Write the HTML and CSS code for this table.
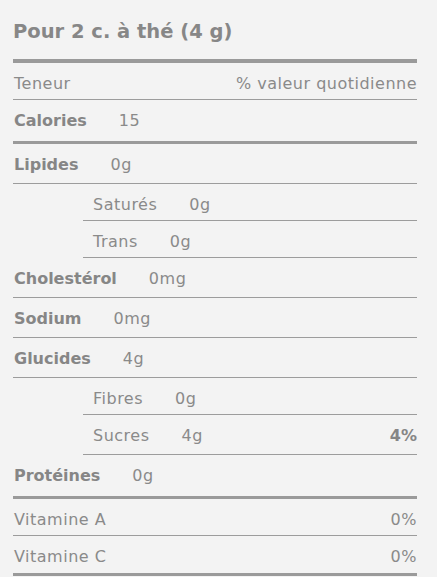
FILE: index.html
```html
<!DOCTYPE html>
<html lang="fr">
<head>
<meta charset="utf-8">
<title>Valeur nutritive</title>
<link rel="stylesheet" href="styles.css">
</head>
<body>
<div class="panel">
  <h1 class="title">Pour 2 c. à thé (4 g)</h1>
  <div class="facts">
    <div class="row"><span>Teneur</span><span>% valeur quotidienne</span></div>
    <div class="row row--bold row--thick"><span class="item"><b class="label">Calories</b><span>15</span></span></div>
    <div class="row row--bold"><span class="item"><b class="label">Lipides</b><span>0g</span></span></div>
    <div class="row row--sub"><span class="item"><span class="label">Saturés</span><span>0g</span></span></div>
    <div class="row row--sub"><span class="item"><span class="label">Trans</span><span>0g</span></span></div>
    <div class="row row--bold"><span class="item"><b class="label">Cholestérol</b><span>0mg</span></span></div>
    <div class="row row--bold"><span class="item"><b class="label">Sodium</b><span>0mg</span></span></div>
    <div class="row row--bold"><span class="item"><b class="label">Glucides</b><span>4g</span></span></div>
    <div class="row row--sub"><span class="item"><span class="label">Fibres</span><span>0g</span></span></div>
    <div class="row row--sub row--bold"><span class="item"><span class="label">Sucres</span><span>4g</span></span><b class="pct">4%</b></div>
    <div class="row row--bold row--thick"><span class="item"><b class="label">Protéines</b><span>0g</span></span></div>
    <div class="row"><span>Vitamine A</span><span>0%</span></div>
    <div class="row row--thick"><span>Vitamine C</span><span>0%</span></div>
  </div>
</div>
</body>
</html>
```
FILE: styles.css
```css
html, body {
  margin: 0;
  padding: 0;
  background: #f3f3f3;
}

.panel {
  padding: 17px 20px 0 13px;
  font-family: "DejaVu Sans", Inter, sans-serif;
  font-size: 16px;
  letter-spacing: 0.5px;
  color: #8a8a8a;
}

.title {
  margin: 0 0 12px;
  font-size: 19.5px;
  line-height: 30px;
  font-weight: 700;
  letter-spacing: 0;
  color: #878787;
}

.facts {
  border-top: 4px solid #9a9a9a;
}

.row {
  display: flex;
  justify-content: space-between;
  padding: 11px 0 5px 1px;
  line-height: 20px;
  border-bottom: 1px solid #9c9c9c;
}

.row--bold {
  padding-bottom: 8px;
}

.row--thick {
  border-bottom: 3px solid #9a9a9a;
  padding-bottom: 6px;
}

.row--bold.row--thick {
  padding-bottom: 10px;
}

.row--sub {
  margin-left: 70px;
  padding-left: 10px;
}

.item {
  display: flex;
}

.label {
  margin-right: 32px;
}

b.label, .pct {
  font-weight: 700;
  letter-spacing: 0;
  color: #868686;
}
```
